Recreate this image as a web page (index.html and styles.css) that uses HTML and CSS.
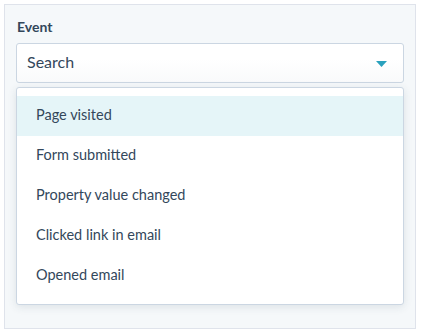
FILE: index.html
```html
<!DOCTYPE html>
<html lang="en">
<head>
    <meta charset="UTF-8">
    <meta name="viewport" content="width=device-width, initial-scale=1.0">
    <title>Event</title>
    <link rel="stylesheet" href="styles.css">
</head>
<body>

<div class="panel">
    <label class="field-label" for="event-search">Event</label>

    <div class="select">
        <div class="select-input">
            <input type="text" id="event-search" class="search" placeholder="Search">
            <svg class="caret" width="11" height="6" viewBox="0 0 11 6">
                <path d="M0 0 H11 L5.5 6 Z" fill="#2aa1bd"/>
            </svg>
        </div>

        <ul class="menu">
            <li class="menu-item active">Page visited</li>
            <li class="menu-item">Form submitted</li>
            <li class="menu-item">Property value changed</li>
            <li class="menu-item">Clicked link in email</li>
            <li class="menu-item">Opened email</li>
        </ul>
    </div>
</div>

</body>
</html>
```

FILE: styles.css
```css
body {
    font-family: 'Lato', 'Noto Sans', sans-serif;
    margin: 0;
    padding: 4px 5px 5px 4px;
    background-color: #ffffff;
    color: #33475b;
}

.panel {
    background-color: #f5f8fa;
    border: 1px solid #dfe3eb;
    height: 323px;
    padding: 0 11px 0 11px;
}

.field-label {
    display: block;
    font-size: 14px;
    font-weight: 700;
    line-height: 18px;
    padding: 13px 0 0 1px;
    margin-bottom: 7px;
}

.select {
    position: relative;
}

.select-input {
    display: flex;
    align-items: center;
    height: 38px;
    border: 1px solid #cbd6e2;
    border-radius: 3px;
    background: linear-gradient(#ffffff 40%, #f9fafb);
    padding: 0 16px 0 10px;
}

.search {
    flex: 1;
    border: none;
    outline: none;
    background: transparent;
    font-family: inherit;
    font-size: 16px;
    color: #33475b;
    padding: 0 0 3px 0;
}

.search::placeholder {
    color: #33475b;
}

.caret {
    display: block;
    margin-top: 1px;
}

.menu {
    position: absolute;
    top: 44px;
    left: 0;
    right: 0;
    list-style: none;
    margin: 0;
    padding: 8px 0;
    background-color: #ffffff;
    border: 1px solid #cbd6e2;
    border-radius: 3px;
    box-shadow: 0 2px 8px rgba(45, 62, 80, 0.12);
}

.menu-item {
    height: 40px;
    line-height: 38px;
    padding-left: 19px;
    font-size: 14.5px;
    color: #33475b;
}

.menu-item.active {
    background-color: #e5f5f8;
}
```
